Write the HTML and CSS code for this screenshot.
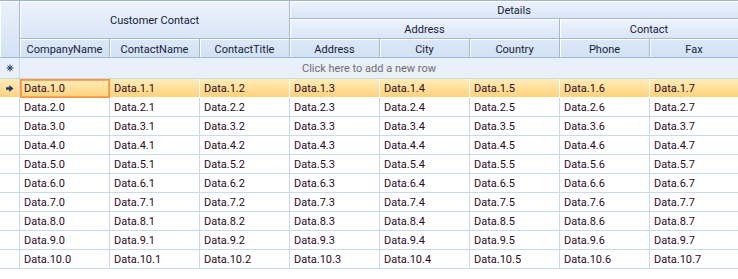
FILE: index.html
```html
<!DOCTYPE html>
<html>
<head>
<meta charset="utf-8">
<link rel="stylesheet" href="styles.css">
</head>
<body>
<div class="grid">
  <div class="h corner"></div>
  <div class="h band cc">Customer Contact</div>
  <div class="h band details">Details</div>
  <div class="h band address">Address</div>
  <div class="h band contact">Contact</div>
  <div class="h col">CompanyName</div>
  <div class="h col">ContactName</div>
  <div class="h col">ContactTitle</div>
  <div class="h col">Address</div>
  <div class="h col">City</div>
  <div class="h col">Country</div>
  <div class="h col">Phone</div>
  <div class="h col last">Fax</div>

  <div class="newhead"><svg width="8" height="8" viewBox="0 0 8 8"><path d="M4 0.5V7.5M0.5 4H7.5M1.6 1.6L6.4 6.4M6.4 1.6L1.6 6.4" stroke="#1f3a6b" stroke-width="1" fill="none"/></svg></div>
  <div class="newrow">Click here to add a new row</div>

  <div class="rh sel"><svg width="8" height="7" viewBox="0 0 8 7"><path d="M0 2.3H3.2V0L7.5 3.5L3.2 7V4.7H0Z" fill="#1f3a6b"/></svg></div>
  <div class="c sel cur">Data.1.0</div><div class="c sel">Data.1.1</div><div class="c sel">Data.1.2</div><div class="c sel">Data.1.3</div><div class="c sel">Data.1.4</div><div class="c sel">Data.1.5</div><div class="c sel">Data.1.6</div><div class="c sel last">Data.1.7</div>

  <div class="rh"></div><div class="c">Data.2.0</div><div class="c">Data.2.1</div><div class="c">Data.2.2</div><div class="c">Data.2.3</div><div class="c">Data.2.4</div><div class="c">Data.2.5</div><div class="c">Data.2.6</div><div class="c last">Data.2.7</div>
  <div class="rh"></div><div class="c">Data.3.0</div><div class="c">Data.3.1</div><div class="c">Data.3.2</div><div class="c">Data.3.3</div><div class="c">Data.3.4</div><div class="c">Data.3.5</div><div class="c">Data.3.6</div><div class="c last">Data.3.7</div>
  <div class="rh"></div><div class="c">Data.4.0</div><div class="c">Data.4.1</div><div class="c">Data.4.2</div><div class="c">Data.4.3</div><div class="c">Data.4.4</div><div class="c">Data.4.5</div><div class="c">Data.4.6</div><div class="c last">Data.4.7</div>
  <div class="rh"></div><div class="c">Data.5.0</div><div class="c">Data.5.1</div><div class="c">Data.5.2</div><div class="c">Data.5.3</div><div class="c">Data.5.4</div><div class="c">Data.5.5</div><div class="c">Data.5.6</div><div class="c last">Data.5.7</div>
  <div class="rh"></div><div class="c">Data.6.0</div><div class="c">Data.6.1</div><div class="c">Data.6.2</div><div class="c">Data.6.3</div><div class="c">Data.6.4</div><div class="c">Data.6.5</div><div class="c">Data.6.6</div><div class="c last">Data.6.7</div>
  <div class="rh"></div><div class="c">Data.7.0</div><div class="c">Data.7.1</div><div class="c">Data.7.2</div><div class="c">Data.7.3</div><div class="c">Data.7.4</div><div class="c">Data.7.5</div><div class="c">Data.7.6</div><div class="c last">Data.7.7</div>
  <div class="rh"></div><div class="c">Data.8.0</div><div class="c">Data.8.1</div><div class="c">Data.8.2</div><div class="c">Data.8.3</div><div class="c">Data.8.4</div><div class="c">Data.8.5</div><div class="c">Data.8.6</div><div class="c last">Data.8.7</div>
  <div class="rh"></div><div class="c">Data.9.0</div><div class="c">Data.9.1</div><div class="c">Data.9.2</div><div class="c">Data.9.3</div><div class="c">Data.9.4</div><div class="c">Data.9.5</div><div class="c">Data.9.6</div><div class="c last">Data.9.7</div>
  <div class="rh"></div><div class="c">Data.10.0</div><div class="c">Data.10.1</div><div class="c">Data.10.2</div><div class="c">Data.10.3</div><div class="c">Data.10.4</div><div class="c">Data.10.5</div><div class="c">Data.10.6</div><div class="c last">Data.10.7</div>
</div>
</body>
</html>
```
FILE: styles.css
```css
html, body {
  margin: 0;
  padding: 0;
  background: #ffffff;
}
body {
  width: 738px;
  height: 279px;
  overflow: hidden;
  font-family: Roboto, "Liberation Sans", sans-serif;
  font-size: 11px;
}
.grid {
  display: grid;
  grid-template-columns: 20px repeat(7, 90px) 88px;
  grid-template-rows: 19px 20px 19px 21px repeat(10, 19px);
}
.grid > div {
  box-sizing: border-box;
  display: flex;
  align-items: center;
  white-space: nowrap;
  overflow: hidden;
}
.h {
  justify-content: center;
  color: #17213a;
  background: linear-gradient(to bottom, #edf3fc, #d9e6f7);
  border-right: 1px solid #a3b9d3;
  border-bottom: 1px solid #a3b9d3;
  box-shadow: inset 1px 1px 0 #ffffff;
}
.corner {
  grid-column: 1;
  grid-row: 1 / 4;
  border-top: 1px solid #9bb3d1;
  background: linear-gradient(to bottom, #eaf1fb, #d3e2f5);
}
.cc {
  grid-column: 2 / 5;
  grid-row: 1 / 3;
  border-top: 1px solid #9bb3d1;
  padding-top: 2px;
}
.details {
  grid-column: 5 / 10;
  grid-row: 1;
  border-top: 1px solid #9bb3d1;
  border-right: none;
  padding-top: 1px;
}
.address {
  grid-column: 5 / 8;
  grid-row: 2;
  padding-top: 2px;
}
.contact {
  grid-column: 8 / 10;
  grid-row: 2;
  border-right: none;
  padding-top: 2px;
}
.col {
  background: linear-gradient(to bottom, #dce8f8, #d2e1f4);
  padding-top: 2px;
}
.col.last {
  border-right: none;
}
.newhead {
  justify-content: center;
  background: #e9f0fa;
  border-right: 1px solid #c9d9ee;
  border-bottom: 1px solid #c9d9ee;
}
.newrow {
  grid-column: 2 / span 8;
  justify-content: center;
  padding-right: 20px;
  padding-top: 1px;
  color: #6e6e6e;
  background: #e9f0fa;
  border-bottom: 1px solid #c9d9ee;
}
.rh {
  justify-content: center;
  background: #ffffff;
  border-right: 1px solid #c9d9ee;
  border-bottom: 1px solid #c9d9ee;
}
.c {
  padding-left: 4px;
  color: #2a0a24;
  background: #ffffff;
  border-right: 1px solid #c9d9ee;
  border-bottom: 1px solid #c9d9ee;
}
.c.last {
  border-right: none;
}
.grid > .sel {
  background: linear-gradient(to bottom, #ffecb8, #ffd27c);
  border-right-color: #ffffff;
  border-bottom-color: #ffffff;
}
.grid > .rh.sel {
  border-right-color: #c9d9ee;
}
.grid > .cur {
  padding-left: 3px;
  border: 1px solid #f7923d;
  box-shadow: inset 0 0 0 1px #f9a35b;
}
```
